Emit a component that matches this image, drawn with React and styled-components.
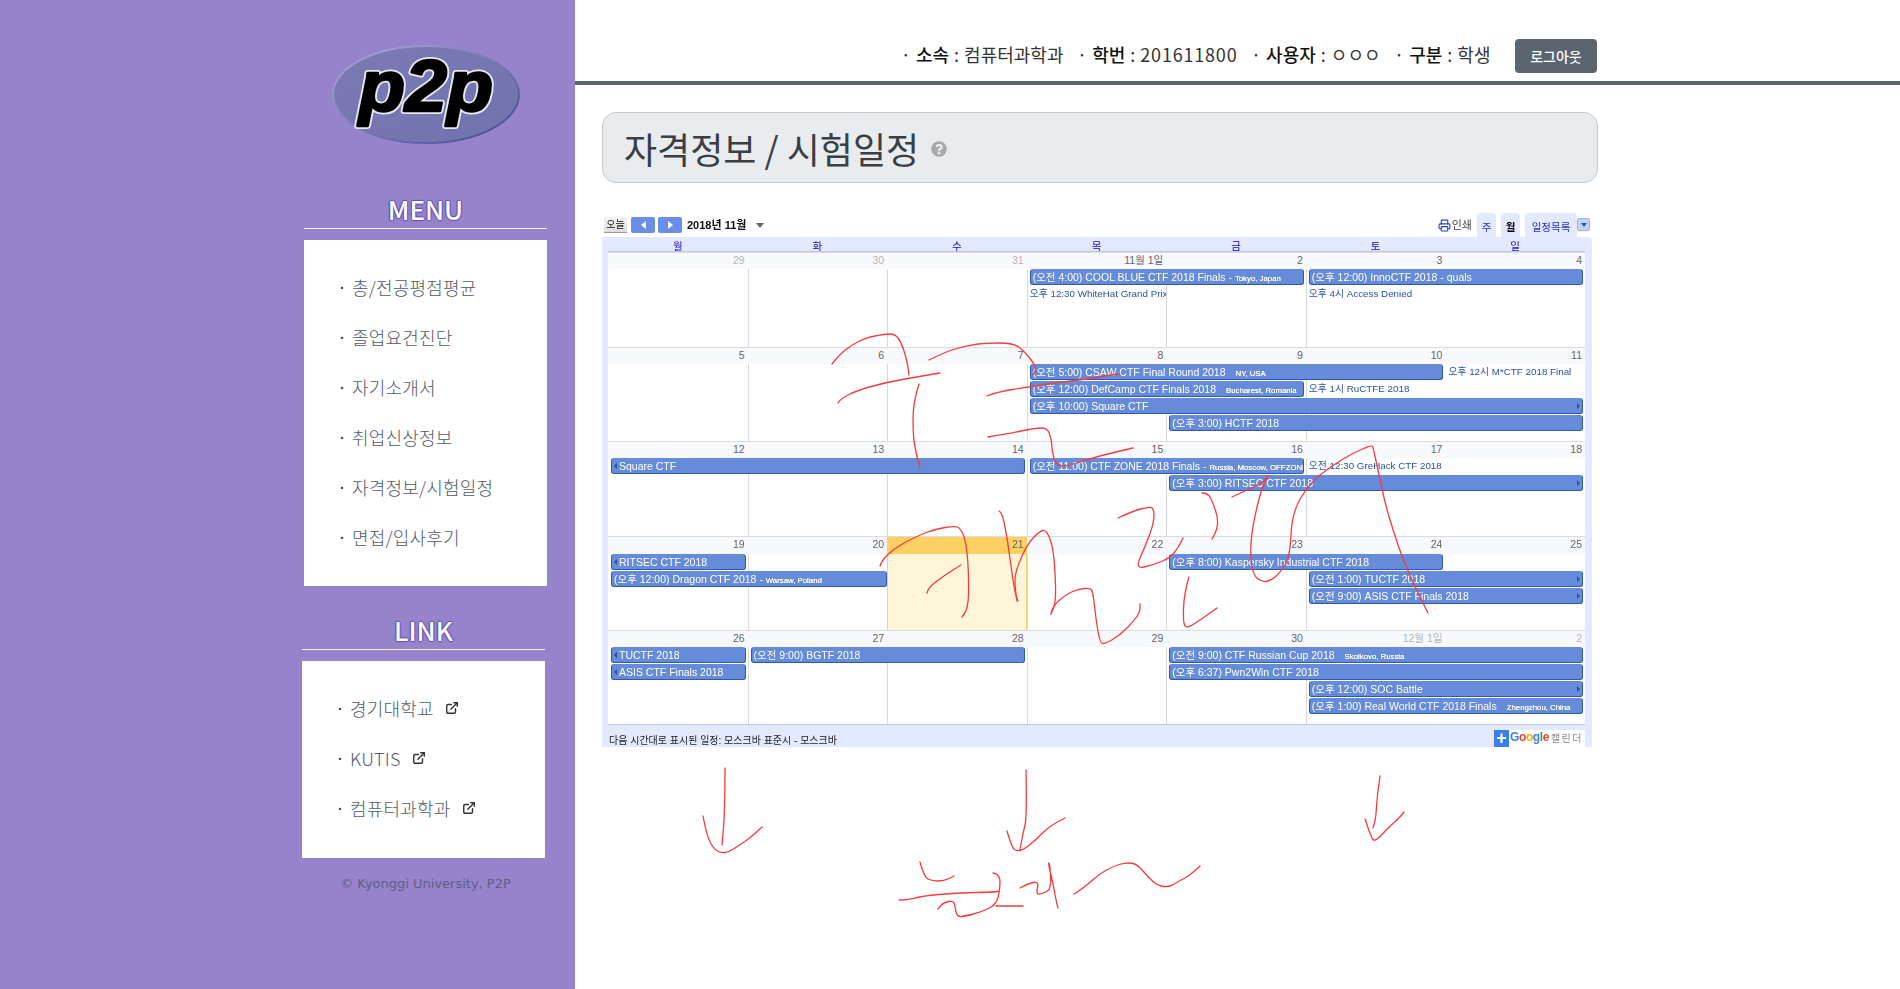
import React from 'react';
import styled, { createGlobalStyle } from 'styled-components';
import { ExternalLink, Printer } from 'lucide-react';
import { FaQuestionCircle } from 'react-icons/fa';

const KR = `"Noto Sans CJK KR", "Noto Sans", sans-serif`;
const CAL = `"Liberation Sans", "Noto Sans CJK KR", sans-serif`;

const GlobalStyle = createGlobalStyle`
  html, body { margin: 0; padding: 0; height: 100%; background: #fff; overflow: hidden; }
  * { box-sizing: border-box; }
`;

const Page = styled.div`
  display: flex;
  position: relative;
  width: 1900px;
  height: 989px;
  font-family: ${KR};
`;

/* sidebar */
const Sidebar = styled.aside`
  width: 575px;
  height: 100%;
  flex: none;
  background: #9583cb;
  padding: 45px 0 0 304px;
`;

const SideColumn = styled.div`
  width: 243px;
  display: flex;
  flex-direction: column;
`;

const Logo = styled.svg`
  display: block;
  align-self: center;
`;

const SideSection = styled.section`
  width: 243px;
  margin-top: ${p => p.$top}px;
  margin-left: ${p => p.$shift || 0}px;
`;

const SideTitle = styled.h2`
  margin: 0 0 11px;
  padding-bottom: 5px;
  border-bottom: 1px solid #f4f0ff;
  font-size: 26px;
  font-weight: 500;
  line-height: 29px;
  text-align: center;
  color: #fff;
  text-shadow: 1px 0 1px #5f4dbb, -1px 0 1px #5f4dbb, 0 1px 1px #5f4dbb, 0 -1px 1px #5f4dbb;
`;

const SideBox = styled.ul`
  list-style: none;
  margin: 0;
  padding: 22px 0 0 34px;
  height: ${p => p.$height}px;
  background: #fff;
`;

const SideItem = styled.li`
  display: flex;
  align-items: center;
  height: 50px;
  font-size: 18px;
  font-weight: 300;
  letter-spacing: 0.2px;
  color: #4f5b68;
  white-space: nowrap;

  &::before {
    content: "·";
    width: 14px;
    flex: none;
    font-size: 14px;
    font-weight: 500;
    color: #333;
  }
`;

const ExtIcon = styled(ExternalLink)`
  margin-left: 11px;
  color: #333;
`;

const Copyright = styled.div`
  margin-top: 16px;
  line-height: 20px;
  text-align: center;
  font-family: "DejaVu Sans", sans-serif;
  font-size: 13px;
  color: #5f5f8a;
`;

/* main column */
const Main = styled.main`
  flex: 1;
  min-width: 0;
`;

const TopBar = styled.header`
  display: flex;
  justify-content: flex-end;
  align-items: center;
  gap: 13.5px;
  height: 85px;
  padding: 31px 303px 0 0;
  border-bottom: 4px solid #5a6570;
`;

const Info = styled.span`
  margin-bottom: 4px;
  font-size: 18px;
  font-weight: 400;
  word-spacing: 1px;
  color: #333;
  white-space: nowrap;

  b {
    font-weight: 500;
    color: #111;
  }
`;

const Digits = styled.span`
  letter-spacing: 0.8px;
`;

const LogoutButton = styled.button`
  width: 82px;
  height: 34px;
  margin-left: 11px;
  border: 0;
  border-radius: 4px;
  background: #5a6570;
  color: #fff;
  font-family: ${KR};
  font-size: 14px;
  font-weight: 500;
`;

const Content = styled.div`
  padding: 27px 0 0 27px;
`;

const Jumbotron = styled.div`
  display: flex;
  align-items: center;
  gap: 12px;
  width: 996px;
  height: 71px;
  padding-left: 21px;
  background: #e9ecef;
  border: 1px solid #c8cbce;
  border-radius: 14px;
`;

const PageTitle = styled.h1`
  margin: 0;
  font-size: 36px;
  font-weight: 400;
  color: #3a3f44;
`;

const HelpIcon = styled(FaQuestionCircle)`
  color: #a9a9a9;
  margin-top: 2px;
`;

/* calendar */
const Calendar = styled.div`
  width: 990px;
  margin-top: 30px;
  font-family: ${CAL};
  filter: blur(0.45px);
`;

const CalToolbar = styled.div`
  display: flex;
  align-items: flex-start;
  height: 24px;
  padding: 4px 2px 0 2px;
`;

const TodayButton = styled.div`
  width: 23px;
  height: 16px;
  background: linear-gradient(#f4f4f4, #ddd);
  border-bottom: 1px solid #999;
  font-size: 10px;
  line-height: 16px;
  text-align: center;
  color: #111;
`;

const NavButton = styled.div`
  display: flex;
  align-items: center;
  justify-content: center;
  width: 24px;
  height: 16px;
  margin-left: ${p => p.$gap}px;
  background: #6a8ee8;
  border-radius: 2px;
`;

const Triangle = styled.i`
  width: 0;
  height: 0;
  border-style: solid;
  border-color: transparent;
  border-width: 4px 0 4px 5px;
  border-left-color: #fff;
  transform: ${p => (p.$left ? 'scaleX(-1)' : 'none')};
`;

const MonthTitle = styled.div`
  margin-left: 5px;
  font-size: 11px;
  font-weight: 700;
  line-height: 17px;
  color: #111;
`;

const MonthCaret = styled.i`
  width: 0;
  height: 0;
  margin: 6px 0 0 10px;
  border-style: solid;
  border-color: #666 transparent transparent;
  border-width: 5px 4px 0;
`;

const ToolSpacer = styled.div`
  flex: 1;
`;

const PrintLink = styled.div`
  display: flex;
  align-items: center;
  gap: 1px;
  margin-right: 5px;
  font-size: 11px;
  line-height: 16px;
  color: #444;
`;

const Tab = styled.div`
  width: ${p => p.$width}px;
  height: 24px;
  margin: -4px 5px 0 0;
  padding-top: 6px;
  background: #e3e9ff;
  border-radius: 4px 4px 0 0;
  font-size: 10.5px;
  line-height: 16px;
  text-align: center;
  color: ${p => (p.$active ? '#000' : '#2233cc')};
  font-weight: ${p => (p.$active ? 700 : 400)};
`;

const ListTab = styled(Tab)`
  margin-right: 0;
`;

const MenuToggle = styled.div`
  display: flex;
  align-items: center;
  justify-content: center;
  width: 13px;
  height: 13px;
  margin: 1px 0 0 0;
  background: #c3d1f5;
  border: 1px solid #9db4ea;
  border-radius: 2px;

  &::after {
    content: "";
    border-style: solid;
    border-color: #3355aa transparent transparent;
    border-width: 4px 3px 0;
  }
`;

const CalBody = styled.div`
  padding: 0 7px 0 6px;
  background: #e3e9ff;
  border-radius: 0 4px 0 0;
`;

const WeekdayRow = styled.div`
  display: grid;
  grid-template-columns: repeat(7, minmax(0, 1fr));
  height: 15px;
  overflow: hidden;
  border-bottom: 1px solid #b8c8f5;
`;

const Weekday = styled.div`
  font-size: 10.5px;
  line-height: 19px;
  text-align: center;
  color: #2200cc;
`;

const Weeks = styled.div`
  background: #fff;
  display: grid;
  grid-template-rows: 95px 94px 95px 94px 94px;
`;

const Week = styled.div`
  display: grid;
  grid-template-columns: repeat(7, minmax(0, 1fr));
  grid-template-rows: ${p => (p.$tall ? 17 : 16)}px repeat(4, 17px) 1fr;
  border-top: 1px solid #dcdcdc;
  overflow: hidden;
`;

const DayCell = styled.div`
  grid-row: 1 / -1;
  grid-column: ${p => p.$col};
  border-left: ${p => (p.$col > 1 && p.$col < 7 ? '1px solid #d8d8d8' : '0')};
  background: ${p => (p.$today ? '#fff6da' : 'transparent')};
  ${p => (p.$today ? 'border-left: 1px solid #f8cf6a; border-right: 1px solid #f8cf6a;' : '')}
`;

const DayLabel = styled.div`
  grid-row: 1;
  grid-column: ${p => p.$col};
  padding-right: 3px;
  background: ${p => (p.$today ? '#fcd062' : '#f8f9fd')};
  font-size: 10.5px;
  line-height: 15px;
  text-align: right;
  color: ${p => (p.$other ? '#b5b5b5' : '#666')};
`;

const EventBar = styled.div`
  position: relative;
  grid-row: ${p => p.$row + 1};
  grid-column: ${p => p.$col} / span ${p => p.$span};
  height: 16px;
  margin: 0 ${p => (p.$flush ? 0 : 2)}px 1px 3px;
  padding: 0 2px;
  background: #668cd9;
  border: 1px solid #2f5aa8;
  border-top-color: #668cd9;
  border-radius: 3px;
  font-size: 10.5px;
  line-height: 14px;
  color: #fff;
  white-space: nowrap;
  overflow: hidden;

  small {
    font-size: 7.8px;
    text-shadow: 0 0 0.5px #fff;
    margin-left: ${p => (p.$far ? 10 : 0)}px;
  }
`;

const MoreLeft = styled.i`
  display: inline-block;
  margin: 0 2px 1px 0;
  border-style: solid;
  border-color: transparent #2b4f9e transparent transparent;
  border-width: 3px 3px 3px 0;
`;

const MoreRight = styled.i`
  position: absolute;
  top: 4px;
  right: 2px;
  border-style: solid;
  border-color: transparent transparent transparent #2b4f9e;
  border-width: 3px 0 3px 3px;
`;

const EventText = styled.div`
  grid-row: ${p => p.$row + 1};
  grid-column: ${p => p.$col};
  margin-left: 3px;
  font-size: 9.8px;
  line-height: 15px;
  color: #2952a3;
  white-space: nowrap;
  overflow: hidden;
`;

const CalFooter = styled.div`
  display: flex;
  justify-content: space-between;
  height: 23px;
  border-top: 1px solid #b8c8f5;
  padding-left: 1px;
  font-size: 10px;
  color: #222;
  overflow: hidden;
`;

const TimezoneNote = styled.div`
  padding-top: 9px;
  line-height: 14px;
`;

const GoogleBadge = styled.div`
  display: flex;
  align-items: stretch;
  height: 17px;
  margin-top: 5px;
  width: 91px;
  background: #fff;
`;

const PlusBox = styled.div`
  width: 15px;
  background: #3a7ef0;
  color: #fff;
  font-size: 18px;
  font-weight: 700;
  line-height: 16px;
  text-align: center;
`;

const GoogleWord = styled.div`
  margin-left: 1px;
  font-size: 12px;
  font-weight: 700;
  letter-spacing: -0.4px;
  line-height: 14px;
`;

const Glyph = styled.span`
  color: ${p => p.$c};
`;

const BadgeText = styled.span`
  margin-left: 2px;
  font-size: 10px;
  letter-spacing: 1.4px;
  line-height: 17px;
  color: #888;
`;

/* red pen marks drawn over the whole page */
const PenLayer = styled.svg`
  position: absolute;
  left: 0;
  top: 0;
  pointer-events: none;
`;

const menuItems = ['총/전공평점평균', '졸업요건진단', '자기소개서', '취업신상정보', '자격정보/시험일정', '면접/입사후기'];
const linkItems = ['경기대학교', 'KUTIS', '컴퓨터과학과'];
const weekdays = ['월', '화', '수', '목', '금', '토', '일'];

const weeks = [
  {
    days: ['29', '30', '31', '11월 1일', '2', '3', '4'],
    other: [0, 1, 2],
    bars: [
      { row: 1, col: 4, span: 2, text: '(오전 4:00) COOL BLUE CTF 2018 Finals - ', small: 'Tokyo, Japan' },
      { row: 1, col: 6, span: 2, text: '(오후 12:00) InnoCTF 2018 - quals' },
    ],
    notes: [
      { row: 2, col: 4, text: '오후 12:30 WhiteHat Grand Prix' },
      { row: 2, col: 6, text: '오후 4시 Access Denied' },
    ],
  },
  {
    days: ['5', '6', '7', '8', '9', '10', '11'],
    bars: [
      { row: 1, col: 4, span: 3, text: '(오전 5:00) CSAW CTF Final Round 2018', small: 'NY, USA', far: true },
      { row: 2, col: 4, span: 2, text: '(오후 12:00) DefCamp CTF Finals 2018', small: 'Bucharest, Romania', far: true },
      { row: 3, col: 4, span: 4, text: '(오후 10:00) Square CTF', right: true },
      { row: 4, col: 5, span: 3, text: '(오후 3:00) HCTF 2018' },
    ],
    notes: [
      { row: 1, col: 7, text: '오후 12시 M*CTF 2018 Final' },
      { row: 2, col: 6, text: '오후 1시 RuCTFE 2018' },
    ],
  },
  {
    days: ['12', '13', '14', '15', '16', '17', '18'],
    bars: [
      { row: 1, col: 1, span: 3, text: 'Square CTF', left: true },
      { row: 1, col: 4, span: 2, text: '(오전 11:00) CTF ZONE 2018 Finals - ', small: 'Russia, Moscow, OFFZONE' },
      { row: 2, col: 5, span: 3, text: '(오후 3:00) RITSEC CTF 2018', right: true },
    ],
    notes: [{ row: 1, col: 6, text: '오전 12:30 GreHack CTF 2018' }],
  },
  {
    days: ['19', '20', '21', '22', '23', '24', '25'],
    today: 2,
    bars: [
      { row: 1, col: 1, span: 1, text: 'RITSEC CTF 2018', left: true },
      { row: 1, col: 5, span: 2, text: '(오후 8:00) Kaspersky Industrial CTF 2018' },
      { row: 2, col: 1, span: 2, text: '(오후 12:00) Dragon CTF 2018 - ', small: 'Warsaw, Poland', flush: true },
      { row: 2, col: 6, span: 2, text: '(오전 1:00) TUCTF 2018', right: true },
      { row: 3, col: 6, span: 2, text: '(오전 9:00) ASIS CTF Finals 2018', right: true },
    ],
  },
  {
    days: ['26', '27', '28', '29', '30', '12월 1일', '2'],
    other: [5, 6],
    bars: [
      { row: 1, col: 1, span: 1, text: 'TUCTF 2018', left: true },
      { row: 1, col: 2, span: 2, text: '(오전 9:00) BGTF 2018' },
      { row: 1, col: 5, span: 3, text: '(오전 9:00) CTF Russian Cup 2018', small: 'Skolkovo, Russia', far: true },
      { row: 2, col: 1, span: 1, text: 'ASIS CTF Finals 2018', left: true },
      { row: 2, col: 5, span: 3, text: '(오후 6:37) Pwn2Win CTF 2018' },
      { row: 3, col: 6, span: 2, text: '(오후 12:00) SOC Battle', right: true },
      { row: 4, col: 6, span: 2, text: '(오후 1:00) Real World CTF 2018 Finals', small: 'Zhengzhou, China', far: true },
    ],
  },
];

const penStrokes = [
  [[832, 364], [840, 354], [852, 345], [865, 338], [885, 334], [895, 334], [901, 342], [906, 357], [908, 367], [909, 375]],
  [[838, 403], [840, 399], [858, 390], [888, 382], [922, 376], [940, 373]],
  [[919, 384], [913, 402], [913, 437], [917, 457], [920, 467]],
  [[929, 360], [945, 352], [965, 346], [985, 343], [1014, 343], [1025, 352], [1035, 365], [1036, 370], [1033, 375]],
  [[987, 396], [997, 392], [1028, 387], [1062, 382], [1095, 378], [1103, 376], [1120, 374]],
  [[988, 437], [1012, 433], [1035, 428], [1047, 428], [1051, 437], [1053, 457], [1057, 465], [1065, 467], [1095, 457], [1133, 448]],
  [[1232, 497], [1247, 490], [1262, 483], [1268, 476]],
  [[1268, 476], [1263, 483], [1253, 523], [1250, 553], [1253, 575], [1262, 582], [1270, 581], [1280, 573], [1290, 557], [1292, 512], [1310, 483], [1330, 467], [1353, 453], [1372, 445], [1373, 447], [1378, 470], [1385, 503], [1393, 530], [1403, 560], [1418, 593], [1428, 613]],
  [[1202, 493], [1208, 493], [1213, 503], [1218, 518], [1217, 530], [1212, 539]],
  [[1118, 518], [1133, 511], [1148, 507], [1154, 508], [1154, 523], [1145, 547], [1135, 569], [1153, 565], [1170, 558], [1178, 548], [1183, 538]],
  [[1051, 614], [1052, 607], [1065, 595], [1078, 589], [1090, 588], [1093, 592], [1096, 620], [1100, 643], [1105, 644], [1120, 635], [1133, 622], [1140, 612], [1140, 604]],
  [[1189, 577], [1184, 593], [1183, 625], [1188, 628], [1203, 618], [1217, 608]],
  [[880, 566], [882, 560], [895, 548], [915, 537], [935, 529], [955, 526], [960, 528], [965, 538], [968, 560], [969, 593], [967, 610], [962, 617]],
  [[927, 593], [928, 588], [942, 577], [961, 565]],
  [[999, 511], [1002, 512], [1007, 537], [1012, 573], [1015, 593], [1018, 601]],
  [[1017, 601], [1014, 583], [1017, 567], [1028, 543], [1040, 531], [1046, 530], [1052, 543], [1055, 567], [1056, 602], [1051, 614]],
  [[725, 768], [725, 810], [722, 845]],
  [[703, 816], [707, 837], [714, 849], [721, 853], [729, 852], [741, 844], [750, 838], [762, 827]],
  [[1026, 770], [1027, 817], [1023, 833], [1020, 850]],
  [[1007, 831], [1012, 848], [1017, 851], [1023, 850], [1036, 840], [1048, 827], [1065, 818]],
  [[1380, 776], [1377, 797], [1376, 817], [1373, 828]],
  [[1365, 819], [1371, 837], [1375, 842], [1388, 828], [1400, 817], [1404, 812]],
  [[920, 862], [924, 877], [932, 881], [944, 881], [954, 876]],
  [[899, 900], [908, 900], [922, 896], [956, 893], [995, 892], [999, 891]],
  [[993, 873], [1000, 874], [1000, 890], [996, 905], [981, 912], [966, 916], [957, 917], [955, 907], [954, 901], [944, 902], [938, 909]],
  [[996, 906], [1023, 906]],
  [[1020, 888], [1027, 884], [1039, 881], [1036, 894], [1041, 894], [1046, 892], [1051, 888], [1050, 863], [1048, 863], [1053, 883], [1056, 900], [1058, 908]],
  [[1074, 894], [1085, 887], [1099, 874], [1114, 866], [1124, 863], [1136, 863], [1148, 877], [1158, 886], [1170, 887], [1179, 881], [1189, 876], [1200, 866]],
];

const strokePath = pts => {
  let d = `M${pts[0][0]} ${pts[0][1]}`;
  for (let i = 1; i < pts.length - 1; i++) {
    const mx = (pts[i][0] + pts[i + 1][0]) / 2;
    const my = (pts[i][1] + pts[i + 1][1]) / 2;
    d += ` Q${pts[i][0]} ${pts[i][1]} ${mx} ${my}`;
  }
  const last = pts[pts.length - 1];
  return `${d} L${last[0]} ${last[1]}`;
};

const logoText = {
  x: 94,
  y: 66,
  textAnchor: 'middle',
  fontFamily: 'Liberation Sans',
  fontWeight: 700,
  fontStyle: 'italic',
  fontSize: 72,
  textLength: 134,
  lengthAdjust: 'spacingAndGlyphs',
};

const App = () => (
  <Page>
    <GlobalStyle />
    <Sidebar>
      <SideColumn>
        <Logo width="188" height="99" viewBox="0 0 188 99">
          <defs>
            <linearGradient id="logoFill" x1="0" y1="0" x2="1" y2="1">
              <stop offset="0" stopColor="#7d7ab6" />
              <stop offset="1" stopColor="#6f73ad" />
            </linearGradient>
            <linearGradient id="logoEdge" x1="0" y1="0" x2="1" y2="1">
              <stop offset="0" stopColor="#b0a8dc" />
              <stop offset="0.5" stopColor="#7d7ab6" />
              <stop offset="1" stopColor="#3c4590" />
            </linearGradient>
          </defs>
          <ellipse cx="94" cy="49.5" rx="93" ry="48.5" fill="url(#logoFill)" stroke="url(#logoEdge)" strokeWidth="2" />
          <text {...logoText} fill="#fff" stroke="#e8e8f4" strokeWidth="6" strokeLinejoin="round">p2p</text>
          <text {...logoText} fill="#000" stroke="#000" strokeWidth="2.5" strokeLinejoin="round">p2p</text>
        </Logo>

        <SideSection $top={50}>
          <SideTitle>MENU</SideTitle>
          <SideBox $height={346}>
            {menuItems.map(m => <SideItem key={m}>{m}</SideItem>)}
          </SideBox>
        </SideSection>

        <SideSection $top={29} $shift={-2}>
          <SideTitle>LINK</SideTitle>
          <SideBox $height={197}>
            {linkItems.map(l => (
              <SideItem key={l}>
                {l}
                <ExtIcon size={14} strokeWidth={2.4} />
              </SideItem>
            ))}
          </SideBox>
        </SideSection>

        <Copyright>© Kyonggi University, P2P</Copyright>
      </SideColumn>
    </Sidebar>

    <Main>
      <TopBar>
        <Info>· <b>소속</b> : 컴퓨터과학과</Info>
        <Info>· <b>학번</b> : <Digits>201611800</Digits></Info>
        <Info>· <b>사용자</b> : ㅇㅇㅇ</Info>
        <Info>· <b>구분</b> : 학생</Info>
        <LogoutButton>로그아웃</LogoutButton>
      </TopBar>

      <Content>
        <Jumbotron>
          <PageTitle>자격정보 / 시험일정</PageTitle>
          <HelpIcon size={16} />
        </Jumbotron>

        <Calendar>
          <CalToolbar>
            <TodayButton>오늘</TodayButton>
            <NavButton $gap={4}><Triangle $left /></NavButton>
            <NavButton $gap={3}><Triangle /></NavButton>
            <MonthTitle>2018년 11월</MonthTitle>
            <MonthCaret />
            <ToolSpacer />
            <PrintLink><Printer size={13} color="#2a3fc0" />인쇄</PrintLink>
            <Tab $width={19}>주</Tab>
            <Tab $width={19} $active>월</Tab>
            <ListTab $width={52}>일정목록</ListTab>
            <MenuToggle />
          </CalToolbar>

          <CalBody>
            <WeekdayRow>
              {weekdays.map(d => <Weekday key={d}>{d}</Weekday>)}
            </WeekdayRow>

            <Weeks>
              {weeks.map(w => (
                <Week key={w.days[0]} $tall={w.today !== undefined}>
                  {w.days.map((d, i) => (
                    <DayCell key={`c${d}`} $col={i + 1} $today={w.today === i} />
                  ))}
                  {w.days.map((d, i) => (
                    <DayLabel
                      key={d}
                      $col={i + 1}
                      $today={w.today === i}
                      $other={w.other && w.other.includes(i)}
                    >
                      {d}
                    </DayLabel>
                  ))}
                  {w.bars.map(b => (
                    <EventBar key={b.text} $row={b.row} $col={b.col} $span={b.span} $flush={b.flush} $far={b.far}>
                      {b.left && <MoreLeft />}
                      {b.text}
                      {b.small && <small>{b.small}</small>}
                      {b.right && <MoreRight />}
                    </EventBar>
                  ))}
                  {(w.notes || []).map(n => (
                    <EventText key={n.text} $row={n.row} $col={n.col}>{n.text}</EventText>
                  ))}
                </Week>
              ))}
            </Weeks>

            <CalFooter>
              <TimezoneNote>다음 시간대로 표시된 일정: 모스크바 표준시 - 모스크바</TimezoneNote>
              <GoogleBadge>
                <PlusBox>+</PlusBox>
                <GoogleWord>
                  <Glyph $c="#3a7ef0">G</Glyph>
                  <Glyph $c="#e0442e">o</Glyph>
                  <Glyph $c="#f0b400">o</Glyph>
                  <Glyph $c="#3a7ef0">g</Glyph>
                  <Glyph $c="#2ea44f">l</Glyph>
                  <Glyph $c="#e0442e">e</Glyph>
                </GoogleWord>
                <BadgeText>캘린더</BadgeText>
              </GoogleBadge>
            </CalFooter>
          </CalBody>
        </Calendar>
      </Content>
    </Main>

    <PenLayer width="1900" height="989" viewBox="0 0 1900 989" fill="none" stroke="#f53c3c" strokeWidth="1.3" strokeLinecap="round" strokeLinejoin="round">
      {penStrokes.map((pts, i) => <path key={i} d={strokePath(pts)} />)}
    </PenLayer>
  </Page>
);

export default App;
